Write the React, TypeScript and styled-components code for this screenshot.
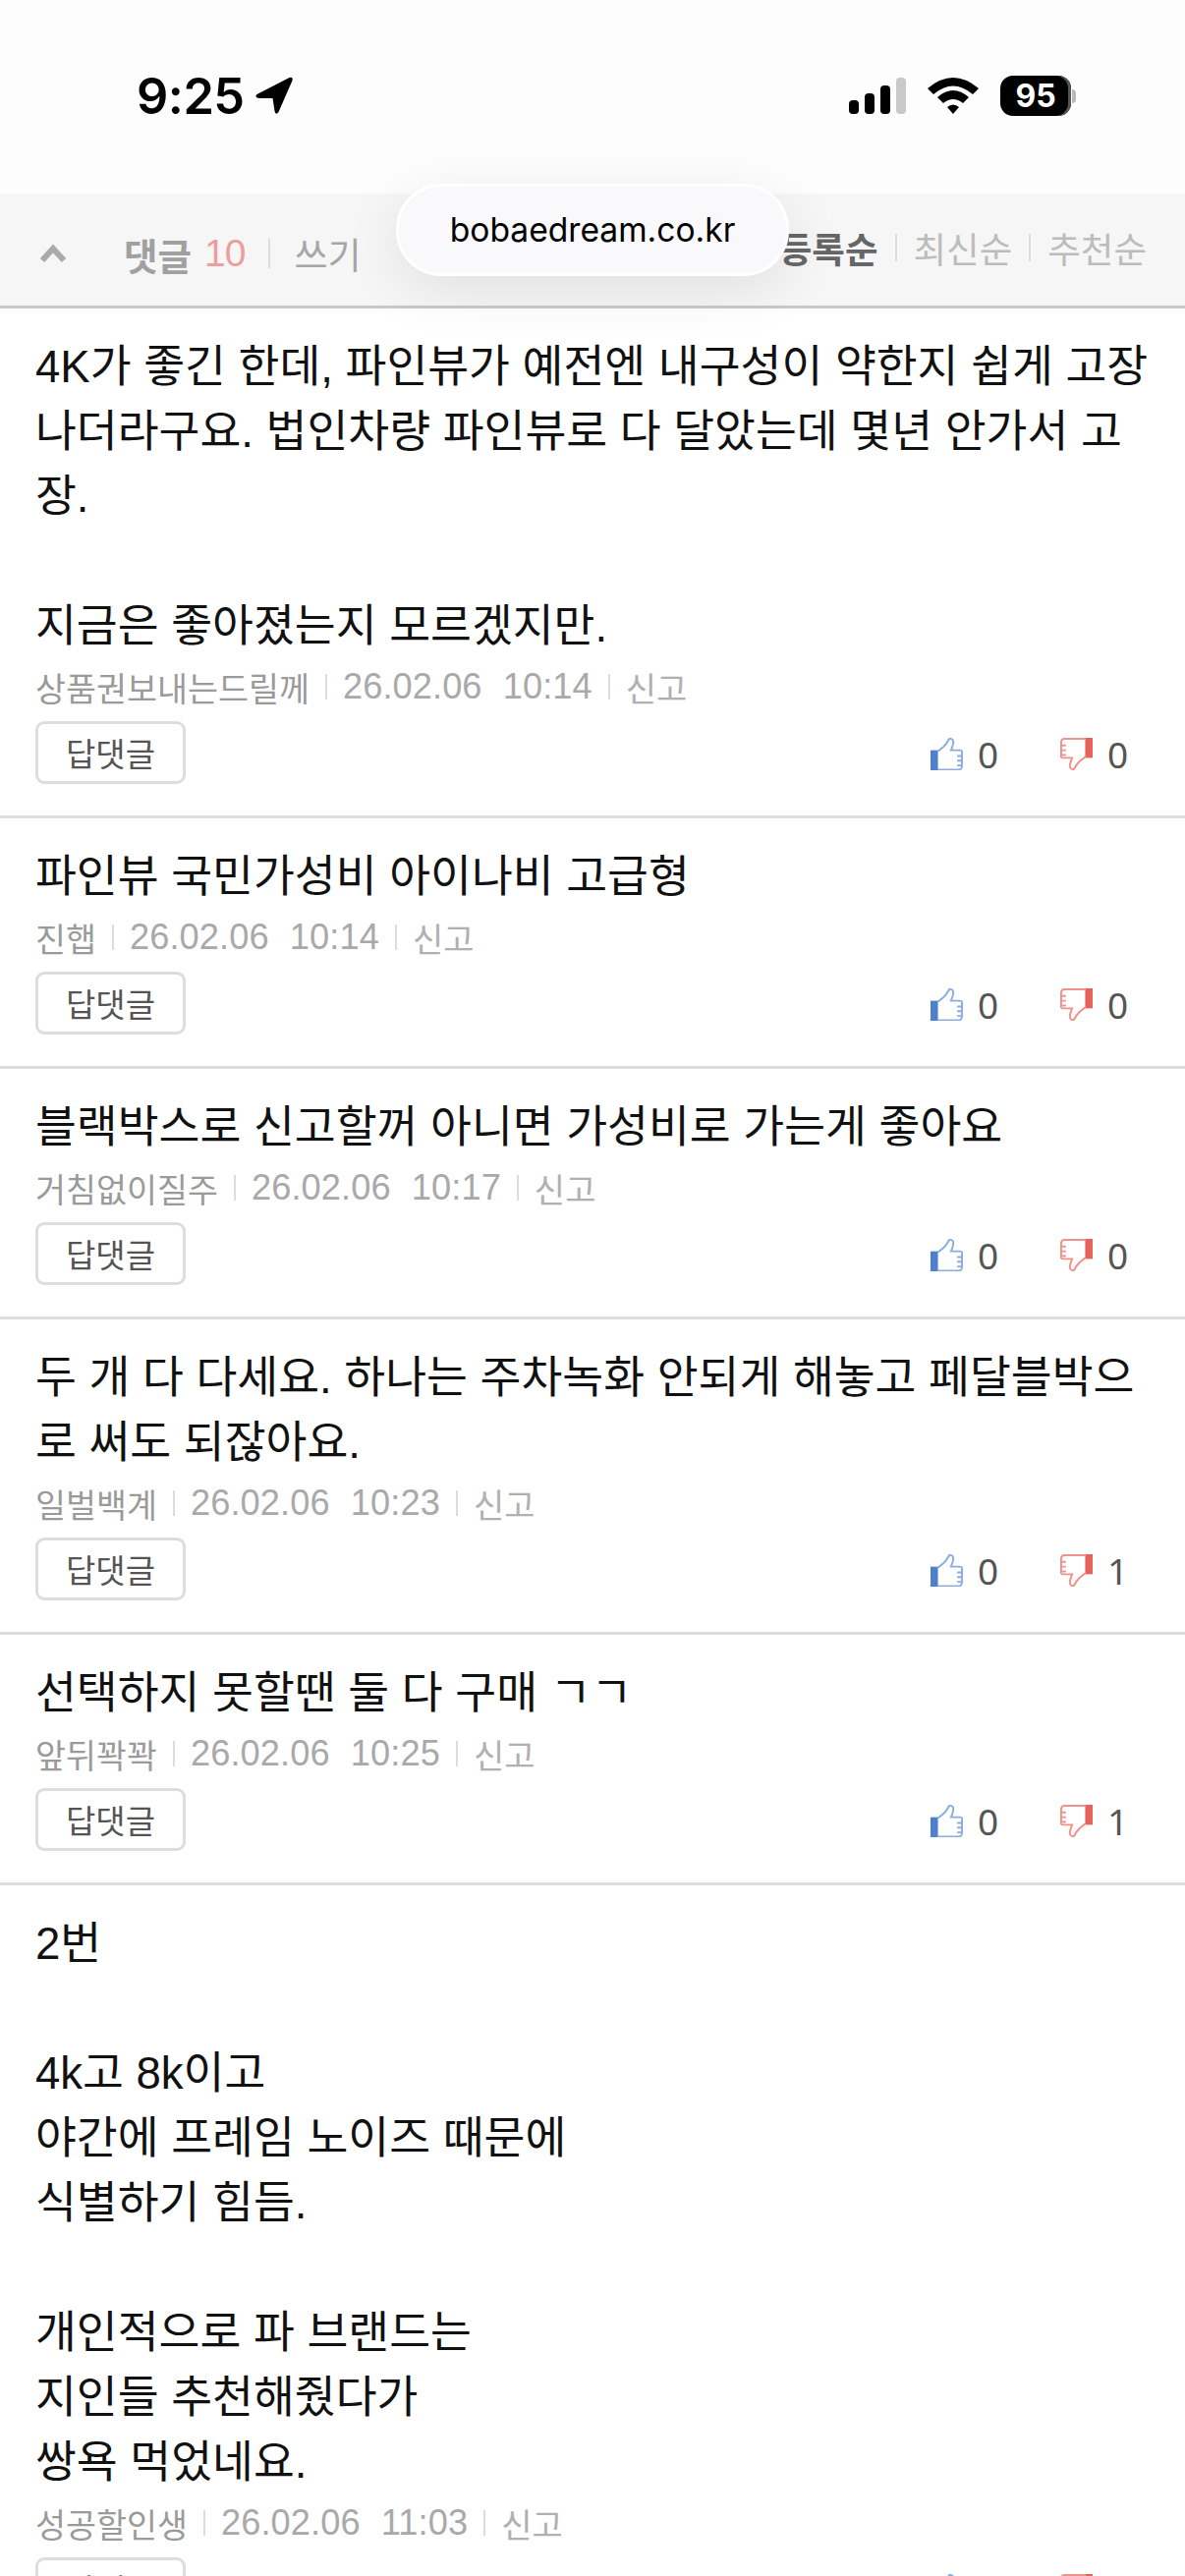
import React from "react";
import styled, { createGlobalStyle } from "styled-components";

const Global = createGlobalStyle`
  html, body { margin: 0; padding: 0; background: #fff; }
  body { font-family: "Liberation Sans", "Noto Sans CJK KR", sans-serif; }
`;
const Page = styled.div`
  position: relative; width: 1206px; height: 2622px; overflow: hidden; background: #fff;
`;
const Status = styled.div`
  height: 197px; box-sizing: border-box; padding: 77px 111px 0 139px; background: #fdfdfd;
  display: flex; justify-content: space-between; align-items: flex-start;
`;
const TimeGroup = styled.div`display: flex; align-items: center; gap: 10px; height: 41px;`;
const Time = styled.span`
  font: 600 50.5px/41px Inter, sans-serif; color: #000; letter-spacing: -0.5px;
`;
const Indicators = styled.div`display: flex; align-items: center; gap: 22px; height: 41px;`;
const Battery = styled.div`display: flex; align-items: center; gap: 1px;`;
const BatteryBody = styled.div`
  width: 72px; height: 41px; border-radius: 13px; background: #000; color: #fff;
  display: flex; align-items: center; justify-content: center;
  font: 700 32px/41px Inter, sans-serif; box-shadow: inset -3px 0 0 #555;
`;
const BatteryNub = styled.div`width: 4px; height: 14px; background: #b9b9b9; border-radius: 0 5px 5px 0;`;
const Bar = styled.div`
  height: 114px; background: #f6f6f6; border-bottom: 3px solid #c9c9c9;
  display: flex; justify-content: space-between; padding: 0 39px 0 40px;
`;
const BarLeft = styled.div`display: flex; align-items: center; padding-top: 8px; height: 106px;`;
const Chevron = styled.svg`width: 28px; height: 20px; margin-right: 58px;`;
const Title = styled.span`font-size: 37.5px; font-weight: 700; color: #a0a0a0;`;
const Count = styled.span`font-size: 39px; color: #ee9d9d; margin-left: 13px; letter-spacing: -1px;`;
const Pipe = styled.i<{ $h: number; $m: number }>`
  display: block; width: 2px; height: ${p => p.$h}px; margin: 0 ${p => p.$m}px; background: #dcdcdc;
`;
const Write = styled.span`font-size: 37px; color: #a6a6a6;`;
const BarRight = styled.div`display: flex; align-items: center; height: 106px; margin-top: 2px;`;
const Sort = styled.span<{ $on?: boolean }>`
  font-size: 36.5px; white-space: nowrap; font-weight: ${p => (p.$on ? 700 : 400)};
  color: ${p => (p.$on ? "#666" : "#bcbcbc")};
`;
const Pill = styled.div`
  position: absolute; left: 403px; top: 187px; width: 400px; height: 94px; box-sizing: border-box;
  border: 3px solid #fff; border-radius: 46px; background: #f9f9fb;
  box-shadow: 0 14px 60px rgba(0,0,0,.09);
  display: flex; align-items: center; justify-content: center;
  font: 400 33.6px/1 Inter, sans-serif; color: #000;
`;
const List = styled.div`display: flex; flex-direction: column;`;
const Row = styled.div`
  border-bottom: 3px solid #ddd; padding: 27px 36px 32px; display: flex; flex-direction: column;
`;
const Line = styled.div`
  height: 66px; line-height: 66px; font-size: 45.5px; color: #111; white-space: nowrap;
`;
const Meta = styled.div`
  display: flex; align-items: center; height: 40px; margin-top: 8px; font-size: 33.7px; color: #a0a0a0; white-space: nowrap;
`;
const Author = styled.span`color: #9a9a9a;`;
const Stamp = styled.span`color: #a9a9a9; font-size: 36.2px; letter-spacing: .1px; word-spacing: 11px;`;
const Report = styled.span`color: #b0b0b0; font-size: 34px;`;
const Actions = styled.div`display: flex; justify-content: space-between; align-items: center; margin-top: 15px; height: 64px;`;
const Reply = styled.div`
  width: 153px; height: 64px; box-sizing: border-box; border: 3px solid #ddd; border-radius: 9px;
  display: flex; align-items: center; justify-content: center; font-size: 33px; color: #555;
`;
const Votes = styled.div`display: flex; align-items: center; margin-right: 23px; margin-top: 3px;`;
const Vote = styled.div`display: flex; align-items: center; gap: 15px; margin-left: 64px;`;
const Num = styled.span`font-size: 37px; color: #555; width: 20px; text-align: center; font-family: "Noto Sans", sans-serif;`;
const ThumbIcon = styled.svg`width: 33px; height: 33px; display: block;`;

const Up = () => (
  <ThumbIcon viewBox="0 0 34 34">
    <path d="M0 13h8v21H0z" fill="#4f80cf" />
    <path d="M8 14l6-5c3-3 4-5 5-7 1-2 5-1 5 2 0 3-1 5-2.500 9H31c2.200 0 2.500 2 2 3v13c0 3-1.500 4.500-3.500 4.500H8" fill="#fff" stroke="#8cabe0" strokeWidth="2" />
    <path d="M28 19h5M28 24h5M28 29h4" stroke="#8cabe0" strokeWidth="2" />
  </ThumbIcon>
);
const Down = () => (
  <ThumbIcon viewBox="0 0 34 34">
    <path d="M34 21h-8V0h8z" fill="#e8625c" />
    <path d="M26 20l-6 5c-3 3-4 5-5 7-1 2-5 1-5-2 0-3 1-5 2.500-9H3c-2.200 0-2.500-2-2-3V5C1 2 2.500 1 4.500 1H26" fill="#fff" stroke="#ee928d" strokeWidth="2" />
    <path d="M1 8h5M1 13h5M2 18h4" stroke="#ee928d" strokeWidth="2" />
  </ThumbIcon>
);

type C = { lines: string[]; name: string; date: string; time: string; down: number };
const data: C[] = [
  { lines: ["4K가 좋긴 한데, 파인뷰가 예전엔 내구성이 약한지 쉽게 고장", "나더라구요. 법인차량 파인뷰로 다 달았는데 몇년 안가서 고", "장.", "", "지금은 좋아졌는지 모르겠지만."], name: "상품권보내는드릴께", date: "26.02.06", time: "10:14", down: 0 },
  { lines: ["파인뷰 국민가성비 아이나비 고급형"], name: "진햅", date: "26.02.06", time: "10:14", down: 0 },
  { lines: ["블랙박스로 신고할꺼 아니면 가성비로 가는게 좋아요"], name: "거침없이질주", date: "26.02.06", time: "10:17", down: 0 },
  { lines: ["두 개 다 다세요. 하나는 주차녹화 안되게 해놓고 페달블박으", "로 써도 되잖아요."], name: "일벌백계", date: "26.02.06", time: "10:23", down: 1 },
  { lines: ["선택하지 못할땐 둘 다 구매 ㄱㄱ"], name: "앞뒤꽉꽉", date: "26.02.06", time: "10:25", down: 1 },
  { lines: ["2번", "", "4k고 8k이고", "야간에 프레임 노이즈 때문에", "식별하기 힘듬.", "", "개인적으로 파 브랜드는", "지인들 추천해줬다가", "쌍욕 먹었네요."], name: "성공할인생", date: "26.02.06", time: "11:03", down: 0 },
];

export default function App() {
  return (
    <Page>
      <Global />
      <Status>
        <TimeGroup>
          <Time>9:25</Time>
          <svg width="41" height="41" viewBox="0 0 40 41">
            <path d="M2 19 L35 2 Q39 1 38 5 L24 37 Q21 41 20 36 L18 23 L4 23 Q-1 22 2 19Z" fill="#000" />
          </svg>
        </TimeGroup>
        <Indicators>
          <svg width="58" height="38" viewBox="0 0 58 38">
            <rect x="0" y="23" width="10" height="14" rx="4" fill="#000" />
            <rect x="16" y="16" width="10" height="21" rx="4" fill="#000" />
            <rect x="32" y="8" width="10" height="29" rx="4" fill="#000" />
            <rect x="48" y="0" width="10" height="37" rx="4" fill="#c9c9c9" />
          </svg>
          <svg width="52" height="38" viewBox="0 0 52 38">
            <path d="M0 11 Q26 -11 52 11 L46 17 Q26 0 6 17Z" fill="#000" />
            <path d="M10 20 Q26 6 42 20 L36 26 Q26 18 16 26Z" fill="#000" />
            <path d="M20 30 Q26 25 32 30 L26 37Z" fill="#000" />
          </svg>
          <Battery>
            <BatteryBody>95</BatteryBody>
            <BatteryNub />
          </Battery>
        </Indicators>
      </Status>
      <Bar>
        <BarLeft>
          <Chevron viewBox="0 0 28 20">
            <path d="M3 17 L14 5 L25 17" fill="none" stroke="#aaa" strokeWidth="6" />
          </Chevron>
          <Title>댓글</Title>
          <Count>10</Count>
          <Pipe $h={30} $m={24} />
          <Write>쓰기</Write>
        </BarLeft>
        <BarRight>
          <Sort $on>등록순</Sort>
          <Pipe $h={28} $m={17} />
          <Sort>최신순</Sort>
          <Pipe $h={28} $m={17} />
          <Sort>추천순</Sort>
        </BarRight>
      </Bar>
      <Pill>bobaedream.co.kr</Pill>
      <List>
        {data.map((c, i) => (
          <Row key={i}>
            {c.lines.map((l, j) => <Line key={j}>{l}</Line>)}
            <Meta>
              <Author>{c.name}</Author>
              <Pipe $h={26} $m={16} />
              <Stamp>{c.date} {c.time}</Stamp>
              <Pipe $h={26} $m={16} />
              <Report>신고</Report>
            </Meta>
            <Actions>
              <Reply>답댓글</Reply>
              <Votes>
                <Vote><Up /><Num>0</Num></Vote>
                <Vote><Down /><Num>{c.down}</Num></Vote>
              </Votes>
            </Actions>
          </Row>
        ))}
      </List>
    </Page>
  );
}
